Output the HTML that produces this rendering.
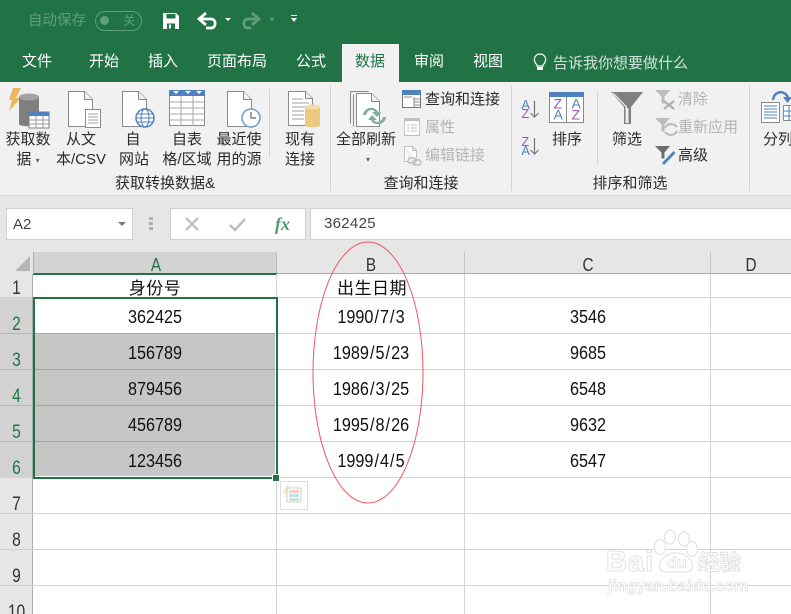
<!DOCTYPE html>
<html lang="zh"><head><meta charset="utf-8"><title>Excel</title>
<style>
html,body{margin:0;padding:0;background:#fff}
#p{position:relative;width:791px;height:614px;overflow:hidden;background:#fff;font-family:"Liberation Sans","Noto Sans CJK SC",sans-serif;color:#222}
#p div{position:absolute}
.t{white-space:nowrap;font-size:15px;line-height:20px;text-align:center;transform:translateX(-50%);color:#2b2b2b}
.l{white-space:nowrap;font-size:15px;line-height:20px;color:#2b2b2b}
.d{color:#b4b4b4}
.tab{white-space:nowrap;font-size:15px;line-height:20px;color:#fff;top:52px;transform:translateX(-50%)}
.v{width:1px;background:#d4d4d4}
.g{font-size:15px;color:#2b2b2b;top:174px;white-space:nowrap;line-height:20px;transform:translateX(-50%)}
.c{font-size:18.5px;line-height:20px;color:#111;white-space:nowrap;transform:translateX(-50%) scaleX(.875)}
.c i{font-style:normal;margin:0 1.2px}
.h{font-size:17px;line-height:20px;color:#111;white-space:nowrap;transform:translateX(-50%);letter-spacing:.5px}
.rh{left:0;width:33px;text-align:center;font-size:19px;line-height:20px;color:#217346;transform:scaleX(.82)}
.ch{top:255px;font-size:18px;line-height:20px;color:#333;transform:translateX(-50%) scaleX(.85)}
svg{position:absolute;overflow:visible}
svg text{font-family:"Liberation Sans",sans-serif}
</style></head><body><div id="p">

<div style="left:0;top:0;width:791px;height:82px;background:#217346"></div>
<div class="l" style="left:28px;top:11px;color:#5f9f7e;font-size:14.5px">自动保存</div>
<div style="left:95px;top:11px;width:45px;height:18px;border:1px solid #5f9f7e;border-radius:10px"></div>
<div style="left:100px;top:16px;width:9px;height:9px;border-radius:50%;background:#5f9f7e"></div>
<div class="l" style="left:123px;top:11px;color:#5f9f7e;font-size:12.5px">关</div>
<svg style="left:163px;top:13px" width="17" height="17" viewBox="0 0 17 17"><path d="M0 0h13l3 3v13H0z" fill="#fff"/><rect x="3.500" y="1" width="9" height="4.500" fill="#217346"/><rect x="4" y="10.500" width="8" height="5.500" fill="#217346"/><rect x="6" y="11.500" width="2" height="4" fill="#fff"/></svg>
<svg style="left:198px;top:13px" width="36" height="17" viewBox="0 0 36 17"><path d="M2 6h11c5.500 0 5.500 9 0 9H8" fill="none" stroke="#fff" stroke-width="2.800"/><path d="M8 0L1 6l7 6" fill="none" stroke="#fff" stroke-width="2.800"/><path d="M27 5h6l-3 3z" fill="#fff"/></svg>
<svg style="left:242px;top:13px" width="36" height="17" viewBox="0 0 36 17"><path d="M16 6H6c-5.500 0-5.500 9 0 9h3" fill="none" stroke="#5f9f7e" stroke-width="2.800"/><path d="M10 0l7 6-7 6" fill="none" stroke="#5f9f7e" stroke-width="2.800"/><path d="M27 5h6l-3 3z" fill="#5f9f7e"/></svg>
<svg style="left:290px;top:15px" width="9" height="9" viewBox="0 0 9 9"><rect x="1" y="0" width="6" height="1" fill="#fff"/><path d="M1 3h6L4 7z" fill="#fff"/></svg>

<div style="left:342px;top:44px;width:57px;height:38px;background:#f1f1f1"></div>
<div class="tab" style="left:37px">文件</div>
<div class="tab" style="left:104px">开始</div>
<div class="tab" style="left:163px">插入</div>
<div class="tab" style="left:237px">页面布局</div>
<div class="tab" style="left:311px">公式</div>
<div class="tab" style="left:370px;color:#217346">数据</div>
<div class="tab" style="left:429px">审阅</div>
<div class="tab" style="left:488px">视图</div>
<svg style="left:533px;top:53px" width="14" height="19" viewBox="0 0 14 19"><path d="M4 12C1 9 1 6 2 4c2-4 8-4 10 0 1 2 1 5-2 8v1H4z" fill="none" stroke="#fff" stroke-width="1.2"/><rect x="4" y="14" width="6" height="3" fill="#fff"/></svg>
<div class="l" style="left:553px;top:54px;color:#d3e3da;font-size:15px">告诉我你想要做什么</div>

<div style="left:0;top:82px;width:791px;height:113px;background:#f1f1f1"></div>
<div style="left:0;top:195px;width:791px;height:1px;background:#d8d8d8"></div>
<div style="left:0;top:196px;width:791px;height:78px;background:#e6e6e6"></div>

<!-- ribbon icons -->
<svg style="left:8px;top:88px" width="42" height="41" viewBox="0 0 42 41"><path d="M5 0h8L8 10h5L1 23l3-11H1z" fill="#eab95f"/><path d="M11 9c0-4 20-4 20 0v27c0 3-20 3-20 0z" fill="#7f7f7f"/><ellipse cx="21" cy="9" rx="10" ry="3.500" fill="#a3a3a3"/><rect x="21" y="24" width="20" height="16" fill="#fff" stroke="#7f7f7f"/><rect x="21" y="24" width="20" height="4" fill="#4f81bd"/><path d="M21 32h20M21 36h20M28 28v12M35 28v12" stroke="#999" fill="none"/></svg>
<svg style="left:68px;top:91px" width="33" height="37" viewBox="0 0 33 37"><path d="M.5.5h16l8 8v27H.5z" fill="#fff" stroke="#8a8a8a"/><path d="M16.500.5v8h8" fill="#f1f1f1" stroke="#8a8a8a"/><rect x="17.500" y="18.500" width="15" height="18" fill="#fff" stroke="#8a8a8a"/><path d="M20 23h10M20 26h10M20 29h10M20 32h10" stroke="#a0a0a0"/></svg>
<svg style="left:122px;top:91px" width="33" height="38" viewBox="0 0 33 38"><path d="M.5.5h16l8 8v27H.5z" fill="#fff" stroke="#8a8a8a"/><path d="M16.500.5v8h8" fill="#f1f1f1" stroke="#8a8a8a"/><circle cx="23" cy="27" r="9" fill="#fff" stroke="#4f81bd" stroke-width="1.500"/><ellipse cx="23" cy="27" rx="4" ry="9" fill="none" stroke="#4f81bd"/><path d="M14 27h18M15 23h16M15 31h16" stroke="#4f81bd" fill="none"/></svg>
<svg style="left:169px;top:90px" width="36" height="36" viewBox="0 0 36 36"><rect x=".5" y=".5" width="35" height="35" fill="#fff" stroke="#8a8a8a"/><rect width="36" height="6" fill="#4f81bd"/><path d="M1 12h34M1 18h34M1 24h34M1 30h34M12 6v30M24 6v30" stroke="#a8a8a8"/><path d="M4 1h6L7 4zM16 1h6l-3 3zM27 1h6l-3 3z" fill="#fff"/></svg>
<svg style="left:227px;top:91px" width="34" height="38" viewBox="0 0 34 38"><path d="M.5.5h16l8 8v27H.5z" fill="#fff" stroke="#8a8a8a"/><path d="M16.500.5v8h8" fill="#f1f1f1" stroke="#8a8a8a"/><circle cx="24" cy="27" r="9" fill="#fff" stroke="#6f9bcb" stroke-width="1.500"/><path d="M24 21v6h5" fill="none" stroke="#666" stroke-width="1.2"/></svg>
<div class="v" style="left:269px;top:89px;height:69px"></div>
<svg style="left:288px;top:91px" width="33" height="37" viewBox="0 0 33 37"><path d="M.5.5h17l7 7v27H.5z" fill="#fff" stroke="#8a8a8a"/><path d="M17.500.5v7h7" fill="#f1f1f1" stroke="#8a8a8a"/><path d="M4 8h11M4 12h17M4 16h17M4 20h12M4 24h12M4 28h12" stroke="#a0a0a0"/><path d="M17 16c0-3 15-3 15 0v18c0 3-15 3-15 0z" fill="#eec781"/><ellipse cx="24.500" cy="16" rx="7.500" ry="2.500" fill="#f6dca8"/></svg>
<div class="v" style="left:330px;top:86px;height:105px"></div>
<svg style="left:350px;top:90px" width="38" height="38" viewBox="0 0 38 38"><path d="M.5 1.500h18M.5 1.500v32M3.500 4.500v32" fill="none" stroke="#8a8a8a"/><path d="M6.500 3.500h15l8 8v25h-23z" fill="#fff" stroke="#8a8a8a"/><path d="M21.500 3.500v8h8" fill="#f1f1f1" stroke="#8a8a8a"/><path d="M13 25c1-9 13-9 15-3h3l-4 5-5-5h3c-2-3-7-3-9 3zM36 27c-1 9-13 9-15 3h-3l4-5 5 5h-3c2 3 7 3 9-3z" fill="#7daf9a"/></svg>
<svg style="left:402px;top:90px" width="19" height="18" viewBox="0 0 19 18"><rect x=".5" y=".5" width="18" height="17" fill="#fff" stroke="#777"/><rect width="19" height="5" fill="#4f81bd"/><path d="M12 7v10M12 9h6M12 12h6M12 15h6M2 7h8" stroke="#888"/></svg>
<svg style="left:404px;top:118px" width="16" height="18" viewBox="0 0 16 18"><rect x=".5" y=".5" width="15" height="17" fill="#fff" stroke="#c0c0c0"/><rect width="16" height="3" fill="#c0c0c0"/><path d="M3 7h2M7 7h6M3 10h2M7 10h6M3 13h2M7 13h6" stroke="#bbb"/></svg>
<svg style="left:404px;top:146px" width="18" height="20" viewBox="0 0 18 20"><path d="M.5.500h8l4 4v8M.5.500v15h4" fill="#fff" stroke="#c0c0c0"/><path d="M8.500.5v4h4" fill="none" stroke="#c0c0c0"/><rect x="4" y="12" width="8" height="5" rx="2.500" fill="none" stroke="#bdbdbd" stroke-width="1.600"/><rect x="9" y="14" width="8" height="5" rx="2.500" fill="none" stroke="#bdbdbd" stroke-width="1.600"/></svg>
<div class="v" style="left:511px;top:86px;height:105px"></div>
<svg style="left:520px;top:98px" width="24" height="22" viewBox="0 0 24 22"><text x="1.500" y="11" font-size="12.500" fill="#4f81bd">A</text><text x="1.500" y="20" font-size="12.500" fill="#9b59b6">Z</text><path d="M14.500 3v16M10.500 15l4 4 4-4" fill="none" stroke="#777" stroke-width="1.200"/></svg>
<svg style="left:520px;top:135px" width="24" height="22" viewBox="0 0 24 22"><text x="1.500" y="11" font-size="12.500" fill="#9b59b6">Z</text><text x="1.500" y="20" font-size="12.500" fill="#4f81bd">A</text><path d="M14.500 3v16M10.500 15l4 4 4-4" fill="none" stroke="#777" stroke-width="1.200"/></svg>
<svg style="left:549px;top:92px" width="35" height="31" viewBox="0 0 35 31"><rect x=".5" y=".5" width="34" height="30" fill="#fff" stroke="#8a8a8a"/><rect width="35" height="5" fill="#4f81bd"/><path d="M17.500 5v25" stroke="#8a8a8a"/><text x="4.500" y="16.500" font-size="14" fill="#9b59b6">Z</text><text x="4.500" y="27.500" font-size="14" fill="#4f81bd">A</text><text x="22.500" y="16.500" font-size="14" fill="#4f81bd">A</text><text x="22.500" y="27.500" font-size="14" fill="#9b59b6">Z</text></svg>
<div class="v" style="left:597px;top:91px;height:73px"></div>
<svg style="left:611px;top:92px" width="33" height="33" viewBox="0 0 33 33"><path d="M0 0h32L20 15v17h-7V15z" fill="#7f7f7f"/><path d="M1 1l13.500 14v16h1.500V14.500L3 1z" fill="#e4e4e4"/><path d="M14.500 16h3v15h-3z" fill="#efefef"/></svg>
<svg style="left:655px;top:90px" width="22" height="21" viewBox="0 0 22 21"><path d="M0 0h15L9.500 6.500v7h-3v-7z" fill="#bdbdbd"/><path d="M9 11l10 8M19 11L9 19" stroke="#b0b0b0" stroke-width="2.400"/></svg>
<svg style="left:655px;top:118px" width="24" height="21" viewBox="0 0 24 21"><path d="M0 0h15L9.500 6.500v7h-3v-7z" fill="#bdbdbd"/><path d="M10 10c2-5 9-5 12-1M22 13c-2 5-9 5-12 1" fill="none" stroke="#bdbdbd" stroke-width="2.200"/></svg>
<svg style="left:655px;top:146px" width="21" height="20" viewBox="0 0 21 20"><path d="M0 0h15L9.500 6.500v6h-3v-6z" fill="#6e6e6e"/><path d="M8 17.500L19 6" stroke="#f1f1f1" stroke-width="5"/><path d="M8 18L19.500 6" stroke="#4f81bd" stroke-width="2.800"/></svg>
<div class="v" style="left:749px;top:86px;height:105px"></div>
<svg style="left:761px;top:91px" width="30" height="33" viewBox="0 0 30 33"><rect x=".5" y="11.500" width="18" height="20" fill="#fff" stroke="#8a8a8a"/><path d="M3 15h13M3 18h13M3 21h13M3 24h13M3 27h13" stroke="#4f81bd"/><path d="M12 9c1-10 13-10 15-2" fill="none" stroke="#4f81bd" stroke-width="2.400"/><path d="M22 6h9l-4.500 6z" fill="#4f81bd"/><rect x="22.500" y="14.500" width="12" height="15" fill="#fff" stroke="#8a8a8a"/><path d="M23 20h10M23 25h10M28 15v15" stroke="#4f81bd"/></svg>

<!-- ribbon text -->
<div class="t" style="left:28px;top:130px">获取数</div>
<div class="t" style="left:28px;top:150px">据 <span style="font-size:8px;color:#666;vertical-align:1px">▾</span></div>
<div class="t" style="left:81px;top:130px">从文</div>
<div class="t" style="left:81px;top:150px">本/CSV</div>
<div class="t" style="left:133px;top:130px">自</div>
<div class="t" style="left:134px;top:150px">网站</div>
<div class="t" style="left:187px;top:130px">自表</div>
<div class="t" style="left:187px;top:150px">格/区域</div>
<div class="t" style="left:239px;top:130px">最近使</div>
<div class="t" style="left:239px;top:150px">用的源</div>
<div class="t" style="left:300px;top:130px">现有</div>
<div class="t" style="left:300px;top:150px">连接</div>
<div class="t" style="left:366px;top:130px">全部刷新</div>
<div class="t" style="left:368px;top:150px;font-size:8px;color:#666">▾</div>
<div class="l" style="left:425px;top:90px">查询和连接</div>
<div class="l d" style="left:425px;top:118px">属性</div>
<div class="l d" style="left:425px;top:146px">编辑链接</div>
<div class="t" style="left:567px;top:130px">排序</div>
<div class="t" style="left:627px;top:130px">筛选</div>
<div class="l d" style="left:678px;top:90px">清除</div>
<div class="l d" style="left:678px;top:118px">重新应用</div>
<div class="l" style="left:678px;top:146px">高级</div>
<div class="t" style="left:778px;top:130px">分列</div>
<div class="g" style="left:165px">获取转换数据&amp;</div>
<div class="g" style="left:421px">查询和连接</div>
<div class="g" style="left:630px">排序和筛选</div>

<!-- formula bar -->
<div style="left:6px;top:208px;width:125px;height:30px;background:#fff;border:1px solid #d0d0d0"></div>
<div class="l" style="left:13px;top:215px;font-size:15px;color:#444">A2</div>
<svg style="left:118px;top:222px" width="8" height="4" viewBox="0 0 8 4"><path d="M0 0h8L4 4z" fill="#777"/></svg>
<svg style="left:149px;top:217px" width="5" height="14" viewBox="0 0 5 14"><path d="M0 0h4v3H0zM0 5h4v3H0zM0 10h4v3H0z" fill="#b0b0b0"/></svg>
<div style="left:170px;top:208px;width:134px;height:30px;background:#fff;border:1px solid #d0d0d0"></div>
<svg style="left:185px;top:217px" width="15" height="14" viewBox="0 0 15 14"><path d="M1 1l12 12M13 1L1 13" stroke="#bdbdbd" stroke-width="2.200"/></svg>
<svg style="left:229px;top:218px" width="18" height="14" viewBox="0 0 18 14"><path d="M1 7l5 5L16 1" fill="none" stroke="#bdbdbd" stroke-width="2.500"/></svg>
<div class="l" style="left:275px;top:214px;font:italic bold 18px/20px 'Liberation Serif',serif;color:#4d9a70">fx</div>
<div style="left:310px;top:208px;width:481px;height:30px;background:#fff;border:1px solid #d0d0d0"></div>
<div class="l" style="left:324px;top:214px;font-size:15px;color:#444;letter-spacing:.3px">362425</div>

<!-- sheet headers -->
<svg style="left:15px;top:256px" width="16" height="16" viewBox="0 0 16 16"><path d="M15 0v15H0z" fill="#b6b6b6"/></svg>
<div style="left:33px;top:252px;width:244px;height:21px;background:#d2d2d2"></div>
<div style="left:33px;top:273px;width:244px;height:2px;background:#217346"></div>
<div style="left:277px;top:273px;width:514px;height:1px;background:#ababab"></div>
<div style="left:33px;top:252px;width:1px;height:22px;background:#b0b0b0"></div>
<div style="left:276px;top:252px;width:1px;height:21px;background:#b8b8b8"></div>
<div style="left:464px;top:252px;width:1px;height:21px;background:#c6c6c6"></div>
<div style="left:710px;top:252px;width:1px;height:21px;background:#c6c6c6"></div>
<div class="ch" style="left:156px;color:#217346">A</div>
<div class="ch" style="left:371px">B</div>
<div class="ch" style="left:588px">C</div>
<div class="ch" style="left:751px">D</div>

<div style="left:0;top:274px;width:33px;height:23px;background:#e6e6e6"></div>
<div style="left:0;top:297px;width:33px;height:181px;background:#d2d2d2"></div>
<div style="left:0;top:478px;width:33px;height:136px;background:#e6e6e6"></div>
<div style="left:32px;top:274px;width:1px;height:340px;background:#ababab"></div>
<div style="left:0;top:333px;width:33px;height:1px;background:#b5b5b5"></div>
<div style="left:0;top:369px;width:33px;height:1px;background:#b5b5b5"></div>
<div style="left:0;top:405px;width:33px;height:1px;background:#b5b5b5"></div>
<div style="left:0;top:441px;width:33px;height:1px;background:#b5b5b5"></div>
<div style="left:0;top:513px;width:33px;height:1px;background:#cfcfcf"></div>
<div style="left:0;top:549px;width:33px;height:1px;background:#cfcfcf"></div>
<div style="left:0;top:585px;width:33px;height:1px;background:#cfcfcf"></div>
<div class="rh" style="top:279px;color:#333">1</div>
<div class="rh" style="top:315px">2</div>
<div class="rh" style="top:351px">3</div>
<div class="rh" style="top:387px">4</div>
<div class="rh" style="top:423px">5</div>
<div class="rh" style="top:459px">6</div>
<div class="rh" style="top:495px;color:#333">7</div>
<div class="rh" style="top:531px;color:#333">8</div>
<div class="rh" style="top:567px;color:#333">9</div>
<div class="rh" style="top:603px;color:#333">10</div>

<!-- grid -->
<div style="left:277px;top:297px;width:514px;height:1px;background:#d4d4d4"></div>
<div style="left:277px;top:333px;width:514px;height:1px;background:#d4d4d4"></div>
<div style="left:277px;top:369px;width:514px;height:1px;background:#d4d4d4"></div>
<div style="left:277px;top:405px;width:514px;height:1px;background:#d4d4d4"></div>
<div style="left:277px;top:441px;width:514px;height:1px;background:#d4d4d4"></div>
<div style="left:33px;top:477px;width:758px;height:1px;background:#d4d4d4"></div>
<div style="left:33px;top:513px;width:758px;height:1px;background:#d4d4d4"></div>
<div style="left:33px;top:549px;width:758px;height:1px;background:#d4d4d4"></div>
<div style="left:33px;top:585px;width:758px;height:1px;background:#d4d4d4"></div>
<div style="left:276px;top:274px;width:1px;height:340px;background:#d4d4d4"></div>
<div style="left:464px;top:274px;width:1px;height:340px;background:#d4d4d4"></div>
<div style="left:710px;top:274px;width:1px;height:340px;background:#d4d4d4"></div>

<!-- selection -->
<div style="left:35px;top:333px;width:240px;height:143px;background:#c6c6c6"></div>
<div style="left:35px;top:333px;width:240px;height:1px;background:#a6a6a6"></div>
<div style="left:35px;top:369px;width:240px;height:1px;background:#a6a6a6"></div>
<div style="left:35px;top:405px;width:240px;height:1px;background:#a6a6a6"></div>
<div style="left:35px;top:441px;width:240px;height:1px;background:#a6a6a6"></div>
<div style="left:33px;top:297px;width:241px;height:178px;border:2px solid #217346"></div>
<div style="left:272px;top:474px;width:6px;height:6px;background:#217346;border:1px solid #fff"></div>

<!-- cells -->
<div class="h" style="left:155px;top:279px">身份号</div>
<div class="h" style="left:372px;top:279px">出生日期</div>
<div class="c" style="left:155px;top:307px">362425</div>
<div class="c" style="left:155px;top:343px">156789</div>
<div class="c" style="left:155px;top:379px">879456</div>
<div class="c" style="left:155px;top:415px">456789</div>
<div class="c" style="left:155px;top:451px">123456</div>
<div class="c" style="left:371px;top:307px">1990<i>/</i>7<i>/</i>3</div>
<div class="c" style="left:371px;top:343px">1989<i>/</i>5<i>/</i>23</div>
<div class="c" style="left:371px;top:379px">1986<i>/</i>3<i>/</i>25</div>
<div class="c" style="left:371px;top:415px">1995<i>/</i>8<i>/</i>26</div>
<div class="c" style="left:371px;top:451px">1999<i>/</i>4<i>/</i>5</div>
<div class="c" style="left:588px;top:307px">3546</div>
<div class="c" style="left:588px;top:343px">9685</div>
<div class="c" style="left:588px;top:379px">6548</div>
<div class="c" style="left:588px;top:415px">9632</div>
<div class="c" style="left:588px;top:451px">6547</div>

<!-- quick analysis button -->
<div style="left:280px;top:481px;width:26px;height:27px;background:#fff;border:1px solid #d5e3da"></div>
<svg style="left:282px;top:484px" width="22" height="20" viewBox="0 0 22 20"><path d="M5 1L1 9h3l-2 5 6-7H5l2-6z" fill="#f5e3bd"/><rect x="5" y="4" width="14" height="14" fill="#fff" stroke="#cfcfcf"/><rect x="7" y="6" width="10" height="3" fill="#f3cfc0"/><rect x="7" y="10" width="10" height="3" fill="#c5dcec"/><rect x="7" y="14" width="10" height="3" fill="#cde3d8"/></svg>

<!-- red ellipse -->
<svg style="left:0;top:0" width="791" height="614"><ellipse cx="368" cy="372.500" rx="55" ry="130.500" fill="none" stroke="#f2555f" stroke-width="1"/></svg>

<!-- watermark -->
<svg style="left:650px;top:525px" width="50" height="50" viewBox="0 0 50 50"><g fill="#fff" fill-opacity=".85" stroke="#e2e2e2" stroke-width="1.200"><ellipse cx="10" cy="22" rx="5.500" ry="7.500"/><ellipse cx="20" cy="12" rx="5.500" ry="7"/><ellipse cx="34" cy="14" rx="5.500" ry="7"/><ellipse cx="42" cy="24" rx="5.500" ry="7.500"/><path d="M15 47c-5 0-7-6-4-11 3-5 9-8 15-8s12 3 15 8c3 5 1 11-4 11z"/></g></svg>
<div class="l" style="left:606px;top:544px;font:bold 29px/36px 'Liberation Sans',sans-serif;color:#fff;-webkit-text-stroke:1px #e2e2e2;letter-spacing:1px">Bai</div>
<div class="l" style="left:667px;top:553px;font:bold 16px/22px 'Liberation Sans',sans-serif;color:#fff;-webkit-text-stroke:.8px #e2e2e2">du</div>
<div class="l" style="left:698px;top:548px;font:bold 21.500px/28px 'Noto Sans CJK SC',sans-serif;color:#fff;-webkit-text-stroke:1px #e2e2e2">经验</div>
<div class="l" style="left:608px;top:576px;font:bold 16px/22px 'Liberation Sans',sans-serif;color:#fff;-webkit-text-stroke:.8px #e2e2e2">jingyan.baidu.com</div>

</div></body></html>
